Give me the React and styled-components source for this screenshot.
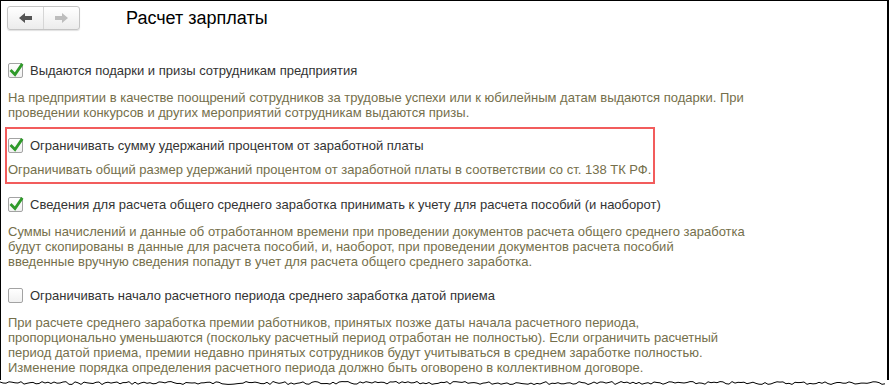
import React from "react";
import styled, { createGlobalStyle } from "styled-components";

const Global = createGlobalStyle`
  html, body { margin: 0; padding: 0; background: #fff; }
  body { font-family: "Liberation Sans", Arial, sans-serif; }
`;

const Frame = styled.div`
  width: 889px;
  box-sizing: border-box;
  border-top: 1px solid #000;
  border-left: 1px solid #000;
  border-right: 2px solid #000;
  height: 380px;
  display: flex;
  flex-direction: column;
  background: #fff;
`;

const Header = styled.div`
  display: flex;
  align-items: center;
  padding: 5px 0 0 6px;
  height: 24px;
`;

const NavGroup = styled.div`
  display: flex;
  width: 73px;
  height: 24px;
  box-sizing: border-box;
  border: 1px solid #c4c4c4;
  border-radius: 3px;
  background: linear-gradient(#ffffff, #ececec);
  box-shadow: 0 1px 1px rgba(0, 0, 0, 0.12);
`;

const NavButton = styled.div`
  flex: 1;
  display: flex;
  align-items: center;
  justify-content: center;
  & + & { border-left: 1px solid #d6d6d6; }
`;

const Title = styled.div`
  margin-left: 46px;
  font-size: 18px;
  line-height: 24px;
  color: #000;
`;

const Content = styled.div`
  flex: 1;
  padding-left: 7px;
`;

const Section = styled.div`
  margin-top: ${(p) => p.$mt}px;
`;

const Highlight = styled.div`
  margin-top: ${(p) => p.$mt}px;
  margin-left: -3px;
  width: 650px;
  box-sizing: border-box;
  border: 2px solid #f25c5c;
  padding: 7px 0 5px 1px;
`;

const Row = styled.div`
  display: flex;
  align-items: center;
  height: 18px;
`;

const Box = styled.span`
  width: 15px;
  height: 15px;
  box-sizing: border-box;
  border: 1px solid #a3a3a3;
  border-radius: 2px;
  background: linear-gradient(#ffffff, #f1f1f1);
  position: relative;
  flex: none;
`;

const Tick = styled.svg`
  position: absolute;
  left: 0px;
  top: -2px;
`;

const Label = styled.span`
  margin-left: 7px;
  font-size: 13px;
  color: #333333;
  white-space: nowrap;
`;

const Desc = styled.div`
  margin-top: ${(p) => p.$mt}px;
  color: #756f4b;
  font-size: 13px;
  line-height: 15px;
`;

const Line = styled.div`
  white-space: nowrap;
`;

const Torn = styled.svg`
  display: block;
  flex: none;
`;

function Check({ checked }) {
  return (
    <Box>
      {checked && (
        <Tick width="15" height="16" viewBox="0 0 15 16">
          <path d="M2.5 9 L6 12.5 L12.5 3" fill="none" stroke="#2f9a2a" strokeWidth="2.8" strokeLinecap="square" />
        </Tick>
      )}
    </Box>
  );
}

function Arrow({ dir, color }) {
  const d = dir === "left" ? "M0 5 L6 0 L6 3 L13 3 L13 7 L6 7 L6 10 Z" : "M13 5 L7 0 L7 3 L0 3 L0 7 L7 7 L7 10 Z";
  return (
    <svg width="13" height="10" viewBox="0 0 13 10">
      <path d={d} fill={color} />
    </svg>
  );
}

function Item({ checked, label, lines, mt, descMt = 11 }) {
  return (
    <Section $mt={mt}>
      <Row>
        <Check checked={checked} />
        <Label>{label}</Label>
      </Row>
      <Desc $mt={descMt}>
        {lines.map((l, i) => (
          <Line key={i}>{l}</Line>
        ))}
      </Desc>
    </Section>
  );
}

function tornPath() {
  let d = "M0 2";
  let seed = 7;
  const rnd = () => {
    seed = (seed * 9301 + 49297) % 233280;
    return seed / 233280;
  };
  for (let x = 3; x <= 887; x += 3) {
    const y = 1.5 + rnd() * 3;
    d += ` L${x} ${y.toFixed(1)}`;
  }
  return d;
}

export default function App() {
  return (
    <>
      <Global />
      <Frame>
        <Header>
          <NavGroup>
            <NavButton>
              <Arrow dir="left" color="#555" />
            </NavButton>
            <NavButton>
              <Arrow dir="right" color="#bdbdbd" />
            </NavButton>
          </NavGroup>
          <Title>Расчет зарплаты</Title>
        </Header>
        <Content>
          <Item
            mt={31}
            checked
            label="Выдаются подарки и призы сотрудникам предприятия"
            lines={[
              "На предприятии в качестве поощрений сотрудников за трудовые успехи или к юбилейным датам выдаются подарки. При",
              "проведении конкурсов и других мероприятий сотрудникам выдаются призы.",
            ]}
          />
          <Highlight $mt={7}>
            <Row>
              <Check checked />
              <Label>Ограничивать сумму удержаний процентом от заработной платы</Label>
            </Row>
            <Desc $mt={8}>
              <Line>Ограничивать общий размер удержаний процентом от заработной платы в соответствии со ст. 138 ТК РФ.</Line>
            </Desc>
          </Highlight>
          <Item
            mt={11}
            checked
            label="Сведения для расчета общего среднего заработка принимать к учету для расчета пособий (и наоборот)"
            lines={[
              "Суммы начислений и данные об отработанном времени при проведении документов расчета общего среднего заработка",
              "будут скопированы в данные для расчета пособий, и, наоборот, при проведении документов расчета пособий",
              "введенные вручную сведения попадут в учет для расчета общего среднего заработка.",
            ]}
          />
          <Item
            mt={17}
            checked={false}
            label="Ограничивать начало расчетного периода среднего заработка датой приема"
            lines={[
              "При расчете среднего заработка премии работников, принятых позже даты начала расчетного периода,",
              "пропорционально уменьшаются (поскольку расчетный период отработан не полностью). Если ограничить расчетный",
              "период датой приема, премии недавно принятых сотрудников будут учитываться в среднем заработке полностью.",
              "Изменение порядка определения расчетного периода должно быть оговорено в коллективном договоре.",
            ]}
          />
        </Content>
      </Frame>
      <Torn width="889" height="6" viewBox="0 0 889 6">
        <path d={tornPath()} fill="none" stroke="#000" strokeWidth="1" />
      </Torn>
    </>
  );
}
